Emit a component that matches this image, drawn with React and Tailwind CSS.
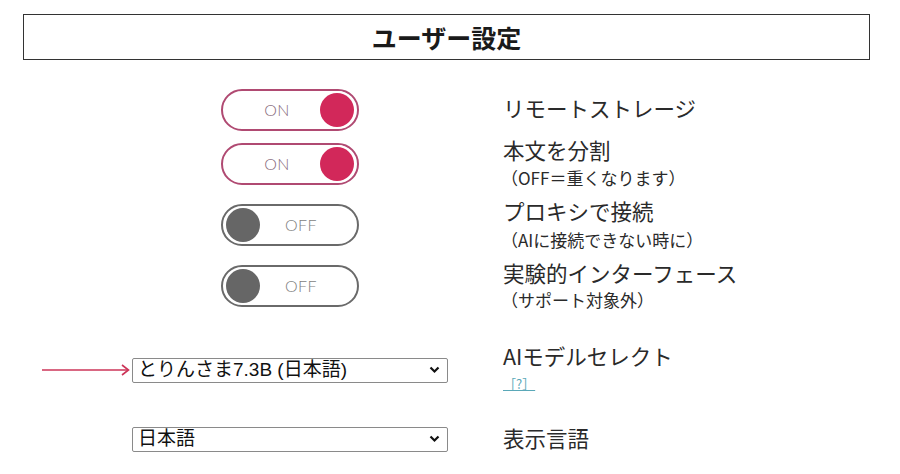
import { useState } from 'react'

const jp = { fontFamily: '"Noto Sans CJK JP", "Noto Sans", sans-serif' }
const selFont = { fontFamily: '"Liberation Sans", "Noto Sans CJK JP", sans-serif' }

const Toggle = ({ on }) => (
  <div
    className={`w-[138px] h-[42px] rounded-full border-2 flex items-center px-[3px] bg-white ${
      on ? 'border-[#b04a72] justify-between' : 'border-[#6a6a6a] justify-between'
    }`}
  >
    {on ? (
      <>
        <span className="flex-1 text-center pl-[8px] text-[16px] font-light text-[#86697a] tracking-wide" style={{ fontFamily: 'Lato, sans-serif' }}>ON</span>
        <span className="w-[34px] h-[34px] rounded-full bg-[#d2285a] ring-2 ring-white" />
      </>
    ) : (
      <>
        <span className="w-[34px] h-[34px] rounded-full bg-[#666666]" />
        <span className="flex-1 text-center pr-[12px] text-[16px] font-light text-[#7e7e7e] tracking-wide" style={{ fontFamily: 'Lato, sans-serif' }}>OFF</span>
      </>
    )}
  </div>
)

const Chevron = () => (
  <svg width="11" height="8" viewBox="0 0 11 8" className="absolute right-[8px] top-1/2 -translate-y-1/2 pointer-events-none">
    <path d="M1.5 1.5 L5.5 5.5 L9.5 1.5" fill="none" stroke="#111" strokeWidth="2.2" />
  </svg>
)

const Select = ({ value, options, arrow }) => {
  const [v, setV] = useState(value)
  return (
    <div className="relative w-[316px]">
      {arrow && (
        <svg width="89" height="12" viewBox="0 0 89 12" className="absolute right-full mr-[1px] top-1/2 -translate-y-1/2">
          <line x1="0" y1="6" x2="86" y2="6" stroke="#cc3458" strokeWidth="1.6" />
          <path d="M80 1 L86.5 6 L80 11" fill="none" stroke="#cc3458" strokeWidth="1.6" />
        </svg>
      )}
      <select
        value={v}
        onChange={(e) => setV(e.target.value)}
        className="appearance-none w-full h-[25px] border border-[#8a8a8a] rounded-[2px] bg-white pl-[5px] text-[19px] leading-[22px] text-[#111]"
        style={selFont}
      >
        {options.map((o) => (
          <option key={o}>{o}</option>
        ))}
      </select>
      <Chevron />
    </div>
  )
}

const Row = ({ left, children, className }) => (
  <div className={`flex items-center ${className}`}>
    <div className="w-[500px] pl-[80px] flex justify-center">{left}</div>
    <div className="pl-[3px] text-[#2a2a2a]" style={jp}>{children}</div>
  </div>
)

export default function App() {
  return (
    <div className="w-[900px] h-[474px] bg-white overflow-hidden pt-[14px]" style={jp}>
      <div className="mx-[23px] w-[847px] h-[46px] border border-[#333] flex items-center justify-center">
        <h1 className="text-[25px] font-bold text-[#1a1a1a] leading-none">ユーザー設定</h1>
      </div>

      <Row left={<Toggle on />} className="mt-[24px] h-[52px]">
        <div className="text-[21.5px] leading-[28px] -mt-[4px]">リモートストレージ</div>
      </Row>
      <Row left={<Toggle on />} className="h-[56px]">
        <div className="text-[21.5px] leading-[28px]">本文を分割</div>
        <div className="text-[17px] leading-[28px] -ml-[2px]">（OFF＝重くなります）</div>
      </Row>
      <Row left={<Toggle />} className="h-[66px]">
        <div className="text-[21.5px] leading-[29px]">プロキシで接続</div>
        <div className="text-[17px] leading-[29px] -ml-[2px]">（AIに接続できない時に）</div>
      </Row>
      <Row left={<Toggle />} className="h-[55px]">
        <div className="text-[21.5px] leading-[27px]">実験的インターフェース</div>
        <div className="text-[17px] leading-[27px] -ml-[2px]">（サポート対象外）</div>
      </Row>
      <Row
        left={<Select arrow value="とりんさま7.3B (日本語)" options={['とりんさま7.3B (日本語)', 'Vecteus', 'Ninja']} />}
        className="mt-[28px] h-[58px]"
      >
        <div className="text-[21.5px] leading-[28px]">AIモデルセレクト</div>
        <a href="#" className="text-[13px] leading-[28px] text-[#5aa8b8] underline">［?］</a>
      </Row>
      <Row
        left={<Select value="日本語" options={['日本語', 'English']} />}
        className="mt-[11px] h-[58px]"
      >
        <div className="text-[21.5px] leading-[28px] -mt-[3px]">表示言語</div>
      </Row>
    </div>
  )
}
